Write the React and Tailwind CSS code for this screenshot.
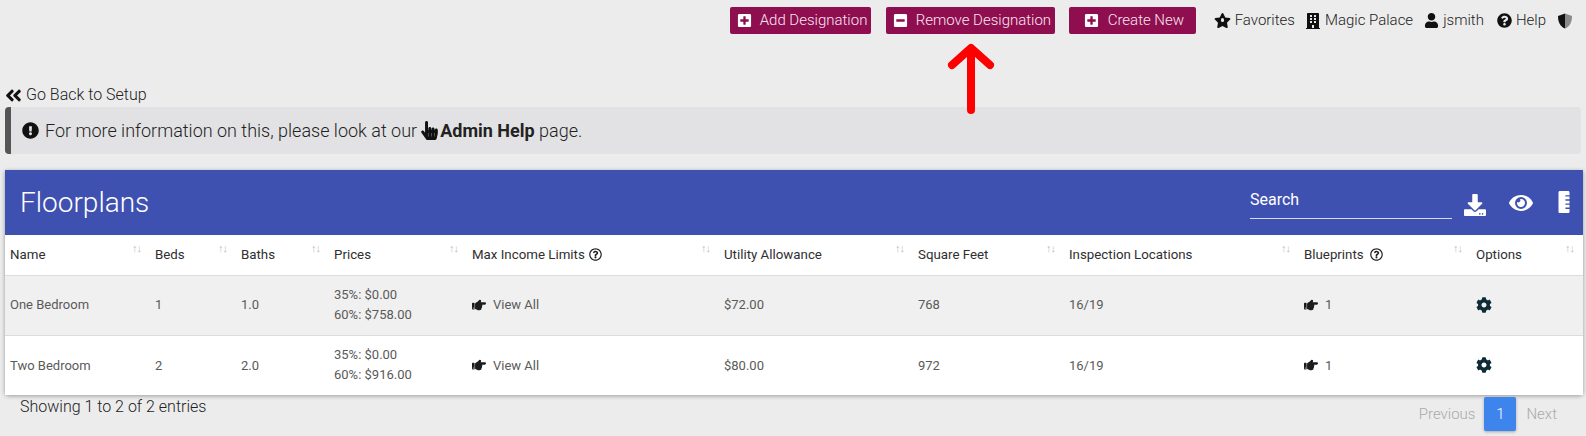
import {
  FaPlusSquare, FaMinusSquare, FaStar, FaBuilding, FaUser, FaQuestionCircle, FaAngleDoubleLeft,
  FaExclamationCircle, FaHandPointer, FaHandPointRight, FaDownload, FaEye, FaRulerVertical, FaCog, FaRegQuestionCircle,
} from 'react-icons/fa';

const columns = [
  { name: 'Name', width: 145 },
  { name: 'Beds', width: 86 },
  { name: 'Baths', width: 93 },
  { name: 'Prices', width: 138 },
  { name: 'Max Income Limits', width: 252, help: true },
  { name: 'Utility Allowance', width: 194 },
  { name: 'Square Feet', width: 151 },
  { name: 'Inspection Locations', width: 235 },
  { name: 'Blueprints', width: 172, help: true, wide: true },
  { name: 'Options', width: 112 },
];

const rows = [
  { name: 'One Bedroom', beds: '1', baths: '1.0', p35: '$0.00', p60: '$758.00', utility: '$72.00', feet: '768' },
  { name: 'Two Bedroom', beds: '2', baths: '2.0', p35: '$0.00', p60: '$916.00', utility: '$80.00', feet: '972' },
];

function ActionButton({ icon: Icon, label, className }) {
  return (
    <button className={`h-[27px] flex items-center bg-[#8e0e50] rounded-[2px] text-[15px] font-light text-[#fbe6f0] whitespace-nowrap ${className}`}>
      <Icon className="text-[15px] text-white shrink-0" />
      <span>{label}</span>
    </button>
  );
}

function NavItem({ icon, label, className }) {
  return (
    <a className={`flex items-center gap-[4px] text-[15px] font-light text-[#222] whitespace-nowrap ${className}`}>
      {icon}
      <span>{label}</span>
    </a>
  );
}

function FavoriteIcon() {
  return (
    <span className="relative flex w-[17px] h-[17px] items-center justify-center">
      <FaStar className="text-[17px] text-[#111]" />
      <span className="absolute w-[3px] h-[4px] rounded-full bg-[#ececec] top-[6px]"></span>
    </span>
  );
}

function ShieldIcon() {
  return (
    <svg width="16" height="16" viewBox="0 0 16 16" className="ml-[11px]">
      <path d="M8 0.5 L1 3 C1 9 3 13.5 8 15.5 Z" fill="#111" />
      <path d="M8 0.5 L15 3 C15 9 13 13.5 8 15.5 Z" fill="#8a8a8a" />
    </svg>
  );
}

function PointerLink({ label }) {
  return (
    <span className="flex items-center gap-[7px]">
      <FaHandPointRight className="text-[14px] text-[#1c1c1c]" />
      <span>{label}</span>
    </span>
  );
}

export default function App() {
  return (
    <div className="relative h-[436px] overflow-hidden bg-[#ececec] font-['Roboto',sans-serif]">
      {/* Top nav */}
      <div className="flex items-center justify-end pt-[7px] pr-[13px]">
        <ActionButton icon={FaPlusSquare} label="Add Designation" className="w-[141px] pl-[7px] gap-[8px]" />
        <ActionButton icon={FaMinusSquare} label="Remove Designation" className="w-[169px] ml-[15px] pl-[7px] gap-[8px]" />
        <ActionButton icon={FaPlusSquare} label="Create New" className="w-[127px] ml-[14px] pl-[15px] gap-[9px]" />
        <NavItem icon={<FavoriteIcon />} label="Favorites" className="ml-[18px]" />
        <NavItem icon={<FaBuilding className="text-[16px] text-[#111]" />} label="Magic Palace" className="ml-[10px]" />
        <NavItem icon={<FaUser className="text-[15px] text-[#111]" />} label="jsmith" className="ml-[11px]" />
        <NavItem icon={<FaQuestionCircle className="text-[15px] text-[#111]" />} label="Help" className="ml-[13px]" />
        <ShieldIcon />
      </div>

      {/* Back link */}
      <a className="mt-[51px] ml-[5px] h-[20px] flex items-center gap-[3px] text-[16px] font-light text-[#222]">
        <FaAngleDoubleLeft className="text-[19px] text-[#111] -ml-[1px]" />
        Go Back to Setup
      </a>

      {/* Notice */}
      <div className="mt-[2px] mx-[5px] h-[47px] flex items-center gap-[6px] pl-[11px] bg-[#e2e2e4] border-l-[6px] border-[#555] rounded-[4px] text-[18px] font-light text-[#222]">
        <FaExclamationCircle className="text-[17px] text-[#111]" />
        <span>For more information on this, please look at our</span>
        <FaHandPointer className="text-[19px] text-[#111] -ml-[3px] -mr-[5px]" />
        <span><strong className="font-bold">Admin Help</strong> page.</span>
      </div>

      {/* Card */}
      <div className="mt-[16px] ml-[5px] mr-[3px] rounded-b-[4px] bg-white shadow-[0_1px_4px_rgba(0,0,0,0.35)]">
        <div className="h-[65px] flex items-center bg-[#3f51b0] pl-[15px] pr-[8px] text-white">
          <h1 className="text-[28px] font-light">Floorplans</h1>
          <div className="ml-auto w-[202px] h-[36px] -mt-[3px] pt-[5px] border-b border-[#d5daf0] text-[16px]">Search</div>
          <FaDownload className="ml-[12px] text-[22px] mt-[4px]" />
          <FaEye className="ml-[23px] text-[24px] mt-[1px]" />
          <FaRulerVertical className="ml-[20px] text-[22px] -mt-[2px]" />
        </div>

        <table className="w-full table-fixed border-collapse text-[13px]">
          <colgroup>
            {columns.map((col) => (
              <col key={col.name} style={{ width: col.width }} />
            ))}
          </colgroup>
          <thead>
            <tr className="h-[40px] border-b border-[#dcdcdc] shadow-[0_1px_2px_rgba(0,0,0,0.08)]">
              {columns.map((col) => (
                <th key={col.name} className="relative pl-[5px] text-left text-[13.3px] font-normal text-[#2f2f2f]">
                  <span className={`flex items-center ${col.wide ? 'gap-[6px]' : 'gap-[4px]'}`}>
                    {col.name}
                    {col.help && <FaRegQuestionCircle className="text-[13px] text-[#222]" />}
                  </span>
                  <span className="absolute right-[9px] top-[7px] text-[11px] leading-[14px] tracking-[-1px] text-[#bdbdbd]">↑↓</span>
                </th>
              ))}
            </tr>
          </thead>
          <tbody className="text-[#5a5a5a]">
            {rows.map((row, i) => (
              <tr key={row.name} className={`h-[60px] ${i === 0 ? 'bg-[#f0f0f0] border-b border-[#dcdcdc]' : 'bg-white'}`}>
                <td className="pl-[5px]">{row.name}</td>
                <td className="pl-[5px]">{row.beds}</td>
                <td className="pl-[5px]">{row.baths}</td>
                <td className="pl-[5px] leading-[20px]">
                  <div>35%: {row.p35}</div>
                  <div>60%: {row.p60}</div>
                </td>
                <td className="pl-[5px]"><PointerLink label="View All" /></td>
                <td className="pl-[5px]">{row.utility}</td>
                <td className="pl-[5px]">{row.feet}</td>
                <td className="pl-[5px]">16/19</td>
                <td className="pl-[5px]"><PointerLink label="1" /></td>
                <td className="pl-[5px]"><FaCog className="text-[16px] text-[#0d2c36]" /></td>
              </tr>
            ))}
          </tbody>
        </table>
      </div>

      {/* Footer */}
      <div className="flex items-start justify-between pl-[20px] pr-[29px] pt-[2px]">
        <div className="-mt-[2px] text-[16px] font-light text-[#222]">Showing 1 to 2 of 2 entries</div>
        <div className="flex items-center text-[15px] font-light text-[#aaa]">
          <span>Previous</span>
          <span className="ml-[9px] w-[32px] h-[34px] flex items-center justify-center rounded-[2px] bg-[#3d85ec] text-white shadow-[0_1px_3px_rgba(0,0,0,0.3)]">1</span>
          <span className="ml-[10px]">Next</span>
        </div>
      </div>

      {/* Red annotation arrow */}
      <svg className="absolute left-[945px] top-[40px]" width="52" height="76" viewBox="0 0 52 76">
        <path d="M26 70 V9 M7 25 L26 8 L45 25" fill="none" stroke="#ff0000" strokeWidth="8" strokeLinecap="round" strokeLinejoin="round" />
      </svg>
    </div>
  );
}
